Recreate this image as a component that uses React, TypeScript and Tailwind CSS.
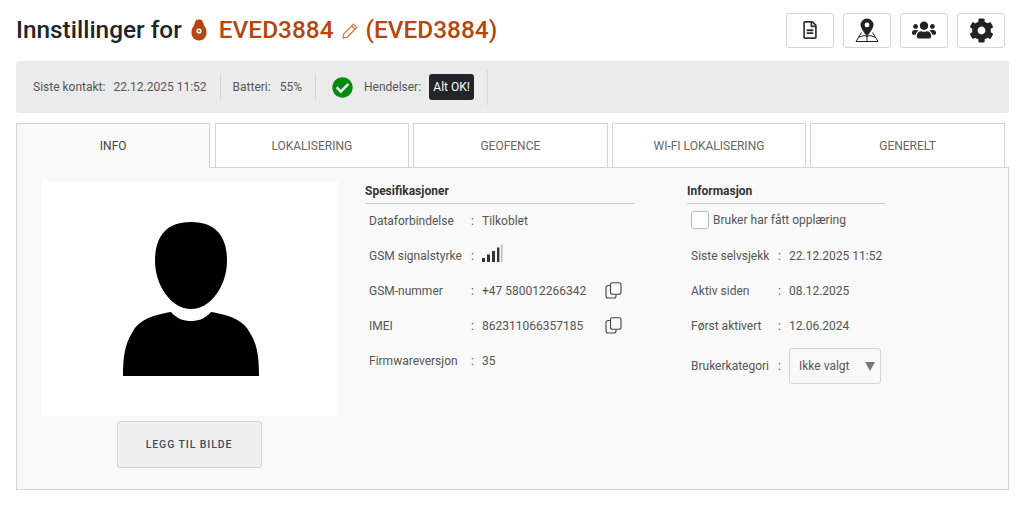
import { FaCheckCircle, FaCog, FaRegFileAlt, FaUsers } from "react-icons/fa";

const tabs = ["INFO", "LOKALISERING", "GEOFENCE", "WI-FI LOKALISERING", "GENERELT"];

function CopyIcon() {
  return (
    <svg width="17" height="17" viewBox="0 0 17 17" fill="none" stroke="#444" strokeWidth="1.1">
      <rect x="5.5" y="0.8" width="10.5" height="11.5" rx="2" />
      <path d="M5.5 3.5H3A2 2 0 0 0 1 5.5V14a2 2 0 0 0 2 2h6a2 2 0 0 0 2-2v-1.7" />
    </svg>
  );
}

function SignalIcon() {
  return (
    <svg width="22" height="19" viewBox="0 0 22 19" className="ml-[-1px] mt-[-4px]">
      <rect x="1" y="14" width="3" height="4" fill="#333" />
      <rect x="6" y="10.5" width="3" height="7.5" fill="#333" />
      <rect x="11" y="7" width="3" height="11" fill="#333" />
      <rect x="16" y="3.5" width="2.4" height="14.5" fill="#333" />
      <rect x="20" y="0.5" width="1.6" height="17.5" fill="#bbb" />
    </svg>
  );
}

function MapPinIcon() {
  return (
    <svg width="24" height="24" viewBox="0 0 24 24">
      <path d="M6.500 14.500 L1 23.500 H23 L17.500 14.500 M12 18.500 V23.500 M3 19.500 L9 17.500 L12 18.500 L15 17.500 L21 19.500" fill="none" stroke="#222" strokeWidth="1" />
      <path
        fillRule="evenodd"
        d="M12 0.500a6.500 6.500 0 0 0-6.500 6.500C5.500 10.500 12 18.500 12 18.500s6.500-8 6.500-11.500A6.500 6.500 0 0 0 12 0.500Zm0 4a2.400 2.400 0 1 1 0 4.800 2.400 2.400 0 0 1 0-4.800Z"
        fill="#222"
      />
    </svg>
  );
}

function TrackerIcon() {
  return (
    <svg width="16" height="22" viewBox="0 0 16 22">
      <path
        d="M5 1C6 .3 10 .3 11 1C12 3 12.500 5 13 6.500C15 9 15.500 11 15.500 14C15.500 18.500 12 21.500 8 21.500C4 21.500 .5 18.500 .5 14C.5 11 1 9 3 6.500C3.500 5 4 3 5 1Z"
        fill="#b5460f"
      />
      <circle cx="8" cy="12" r="2.600" fill="#fff" />
      <circle cx="8" cy="12" r="1" fill="#b5460f" />
    </svg>
  );
}

function PencilIcon() {
  return (
    <svg width="16" height="16" viewBox="0 0 16 16" fill="none" stroke="#c9805a" strokeWidth="1.300" className="mx-[8px] mt-[2px]">
      <path d="M11.500 1.200 L14.800 4.500 L5 14.300 L1 15 L1.700 11 Z M9.800 3 L13 6.200" />
    </svg>
  );
}

function PersonIcon() {
  return (
    <svg width="138" height="156" viewBox="0 0 138 156" fill="#000" className="ml-[2px]">
      <path d="M69 1C42 1 33 18 33 40C33 64 49 88 69 88C89 88 105 64 105 40C105 18 96 1 69 1Z" />
      <path d="M49 91C55 98 62 100 69 100C76 100 83 98 89 91C107 94 122 99 128 112C136 124 137 140 137 155H1C1 140 2 124 10 112C16 99 31 94 49 91Z" />
    </svg>
  );
}

function Row({ label, width, children }: { label: string; width: string; children: React.ReactNode }) {
  return (
    <div className="flex h-[35px] items-center whitespace-nowrap">
      <span className={`${width} shrink-0 text-[#555]`}>{label}</span>
      <span className="w-[11px] shrink-0 text-[#555]">:</span>
      {children}
    </div>
  );
}

export default function App() {
  return (
    <div className="h-[507px] w-[1024px] overflow-hidden bg-white px-[15px] font-['Roboto',sans-serif] text-[12px] text-[#555]">
      <header className="flex h-[61px] items-center justify-between pb-[1px]">
        <div className="flex items-center text-[24.400px] font-medium text-[#212529]">
          <span className="ml-[1px]">Innstillinger for</span>
          <span className="ml-[9px] mr-[12px]"><TrackerIcon /></span>
          <span className="text-[#b5460f]">EVED3884</span>
          <PencilIcon />
          <span className="text-[#b5460f]">(EVED3884)</span>
        </div>
        <div className="mr-[4px] flex gap-[9px]">
          <button className="flex h-[35px] w-[48px] items-center justify-center rounded-[3px] border border-[#d5d5d0] bg-white text-[18px] text-[#333]">
            <FaRegFileAlt />
          </button>
          <button className="flex h-[35px] w-[48px] items-center justify-center rounded-[3px] border border-[#d5d5d0] bg-white">
            <MapPinIcon />
          </button>
          <button className="flex h-[35px] w-[48px] items-center justify-center rounded-[3px] border border-[#d5d5d0] bg-white text-[24px] text-[#222]">
            <FaUsers />
          </button>
          <button className="flex h-[35px] w-[48px] items-center justify-center rounded-[3px] border border-[#d5d5d0] bg-white text-[25px] text-[#222]">
            <FaCog />
          </button>
        </div>
      </header>

      <div className="ml-[1px] flex h-[52px] w-[993px] items-center rounded-[3px] bg-[#ebebeb] pl-[17px] text-[#555]">
        <span>Siste kontakt:</span>
        <span className="ml-[8px]">22.12.2025 11:52</span>
        <span className="ml-[13px] mr-[12px] h-[26px] w-[1px] bg-[#d5d5d5]" />
        <span>Batteri:</span>
        <span className="ml-[9px]">55%</span>
        <span className="ml-[13px] mr-[13px] h-[26px] w-[1px] bg-[#d5d5d5]" />
        <FaCheckCircle className="ml-[3px] text-[21px] text-[#008a0e]" />
        <span className="ml-[11px]">Hendelser:</span>
        <span className="ml-[8px] flex h-[26px] w-[45px] items-center justify-center rounded-[3px] bg-[#212529] text-white">Alt OK!</span>
        <span className="ml-[13px] h-[35px] w-[1px] bg-[#d5d5d5]" />
      </div>

      <nav className="relative z-10 ml-[1px] mt-[10px] flex h-[45px] gap-[4.200px]">
        {tabs.map((tab, i) => (
          <div
            key={tab}
            className={
              i === 0
                ? "flex h-[45px] w-[194.400px] items-center justify-center border border-b-0 border-[#d5d5d0] bg-[#f9f9f9] text-[#444]"
                : "flex h-[45px] w-[194.400px] items-center justify-center border border-[#d5d5d0] bg-white text-[#666]"
            }
          >
            {tab}
          </div>
        ))}
      </nav>

      <main className="ml-[1px] mt-[-1px] flex h-[323px] w-[993px] border border-[#d5d5d0] bg-[#f9f9f9] pl-[25px] pt-[13px]">
        <section className="flex w-[296px] shrink-0 flex-col items-center">
          <div className="flex h-[235px] w-[296px] items-center justify-center bg-white">
            <PersonIcon />
          </div>
          <button className="mr-[2px] mt-[5px] h-[47px] w-[145px] rounded-[3px] border border-[#d5d5d0] bg-[#f0f0f0] text-[10.500px] font-medium tracking-[0.900px] text-[#3f4a5a]">
            LEGG TIL BILDE
          </button>
        </section>

        <section className="ml-[27px] w-[270px] shrink-0">
          <h3 className="h-[23px] border-b border-[#ccc] pt-[1px] font-bold text-[#333]">Spesifikasjoner</h3>
          <div className="mt-[-1px] pl-[4px]">
            <Row label="Dataforbindelse" width="w-[102px]">Tilkoblet</Row>
            <Row label="GSM signalstyrke" width="w-[102px]"><SignalIcon /></Row>
            <Row label="GSM-nummer" width="w-[102px]">
              <span className="w-[123px]">+47 580012266342</span>
              <CopyIcon />
            </Row>
            <Row label="IMEI" width="w-[102px]">
              <span className="w-[123px]">862311066357185</span>
              <CopyIcon />
            </Row>
            <Row label="Firmwareversjon" width="w-[102px]">35</Row>
          </div>
        </section>

        <section className="ml-[52px] w-[198px] shrink-0">
          <h3 className="h-[23px] border-b border-[#ccc] pt-[1px] font-bold text-[#333]">Informasjon</h3>
          <div className="pl-[4px]">
            <div className="flex h-[34px] items-center pb-[2px] text-[#555]">
              <span className="mr-[4px] h-[18px] w-[18px] rounded-[3px] border border-[#bbb] bg-white" />
              Bruker har fått opplæring
            </div>
            <Row label="Siste selvsjekk" width="w-[87px]">22.12.2025 11:52</Row>
            <Row label="Aktiv siden" width="w-[87px]">08.12.2025</Row>
            <Row label="Først aktivert" width="w-[87px]">12.06.2024</Row>
            <div className="mt-[4px] flex h-[38px] items-center">
              <span className="w-[87px] shrink-0 text-[#555]">Brukerkategori</span>
              <span className="w-[11px] shrink-0 text-[#555]">:</span>
              <span className="flex h-[36px] w-[92px] items-center justify-between rounded-[3px] border border-[#d5d5d0] pl-[9px] pr-[5px]">
                Ikke valgt
                <svg width="10" height="9" viewBox="0 0 10 9"><path d="M0 0H10L5 9Z" fill="#777" /></svg>
              </span>
            </div>
          </div>
        </section>
      </main>
    </div>
  );
}
